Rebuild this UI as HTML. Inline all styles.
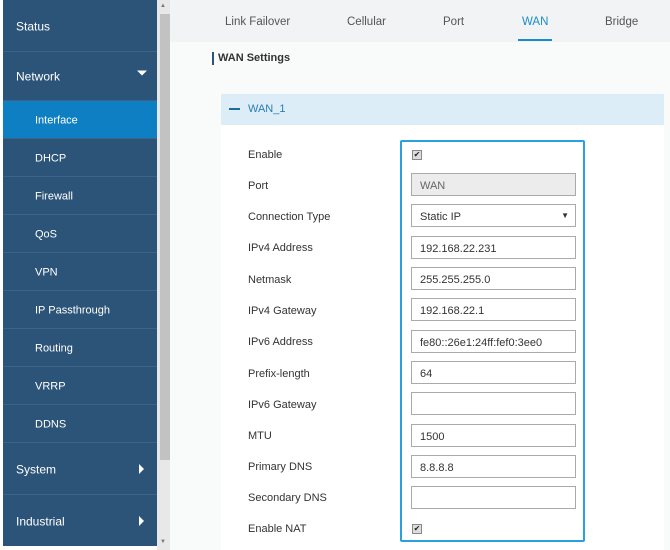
<!DOCTYPE html>
<html><head><style>
*{margin:0;padding:0;box-sizing:border-box}
body{width:670px;height:550px;background:#fff;font-family:"Liberation Sans",sans-serif;position:relative;overflow:hidden}
#sb{position:absolute;left:3px;top:0;width:154px;height:546px;background:#2c5478}
.it{position:absolute;left:0;width:154px;color:#fff;font-size:12px;border-bottom:1px solid #3d6488}
.it span{position:absolute;top:50%;transform:translateY(-45%)}
.top span{left:13px}
.sub span{left:32px;font-size:11px}
.act{background:#0e7fc3}
.tri{position:absolute;right:10px;top:50%;transform:translateY(-50%);width:0;height:0}
#scr{position:absolute;left:157px;top:0;width:13px;height:550px;background:#e8e8e8}
#thumb{position:absolute;left:160px;top:14px;width:10px;height:446px;background:#c2c2c2}
#tabs{position:absolute;left:170px;top:0;width:500px;height:42px;background:#f1f3f4}
.tab{position:absolute;top:16px;font-size:11.5px;color:#555}
#main{position:absolute;left:170px;top:42px;width:500px;height:508px;background:#f9fafa}
.lbl{position:absolute;left:248px;font-size:11px;color:#333}
.inp{position:absolute;left:411px;width:165px;height:23px;border:1px solid #aaa;background:#fff;font-size:11px;color:#333;padding:6px 0 0 8px}
.cb{position:absolute;left:412px;width:10px;height:10px;border:1px solid #888;background:#ddd;font-size:8px;line-height:8px;text-align:center;color:#222}
</style></head><body>
<div id="sb">
<div class="it top" style="top:0;height:52px"><span>Status</span></div>
<div class="it top" style="top:52px;height:49px"><span>Network</span><div class="tri" style="border-left:5px solid transparent;border-right:5px solid transparent;border-top:5px solid #fff;margin-top:-3px"></div></div>
<div class="it sub act" style="top:101px;height:38px"><span>Interface</span></div>
<div class="it sub" style="top:139px;height:38px"><span>DHCP</span></div>
<div class="it sub" style="top:177px;height:38px"><span>Firewall</span></div>
<div class="it sub" style="top:215px;height:38px"><span>QoS</span></div>
<div class="it sub" style="top:253px;height:38px"><span>VPN</span></div>
<div class="it sub" style="top:291px;height:38px"><span>IP Passthrough</span></div>
<div class="it sub" style="top:329px;height:38px"><span>Routing</span></div>
<div class="it sub" style="top:367px;height:38px"><span>VRRP</span></div>
<div class="it sub" style="top:405px;height:38px"><span>DDNS</span></div>
<div class="it top" style="top:443px;height:52px"><span>System</span><div class="tri" style="border-top:5px solid transparent;border-bottom:5px solid transparent;border-left:5px solid #fff;right:13px"></div></div>
<div class="it top" style="top:495px;height:51px;border:none"><span>Industrial</span><div class="tri" style="border-top:5px solid transparent;border-bottom:5px solid transparent;border-left:5px solid #fff;right:13px"></div></div>
</div>
<div id="scr"></div><div id="thumb"></div>
<div id="tabs">
<div class="tab" style="left:55px">Link Failover</div>
<div class="tab" style="left:177px">Cellular</div>
<div class="tab" style="left:273px">Port</div>
<div class="tab" style="left:352px;color:#1a8ccc">WAN</div>
<div style="position:absolute;left:348px;top:39px;width:34px;height:2px;background:#1a8ccc"></div>
<div class="tab" style="left:435px">Bridge</div>
</div>
<div id="main"></div>
<div style="position:absolute;left:212px;top:52px;width:2px;height:13px;background:#2c5478"></div>
<div style="position:absolute;left:218px;top:52px;font-size:11px;font-weight:bold;color:#333">WAN Settings</div>
<div style="position:absolute;left:221px;top:94px;width:443px;height:31px;background:#dcedf7"></div>
<div style="position:absolute;left:229px;top:108px;width:11px;height:2px;background:#1a6e98"></div>
<div style="position:absolute;left:248px;top:103px;font-size:11px;color:#2a7db3">WAN_1</div>
<div style="position:absolute;left:221px;top:125px;width:443px;height:425px;background:#fff"></div>
<div style="position:absolute;left:400px;top:140px;width:185px;height:402px;border:2px solid #2ba0e0;border-radius:2px"></div>
<div class="lbl" style="top:149px">Enable</div><div class="cb" style="top:150px">✔</div>
<div class="lbl" style="top:180px">Port</div><div class="inp" style="top:173px;background:#ececec;color:#666">WAN</div>
<div class="lbl" style="top:211px">Connection Type</div><div class="inp" style="top:204px">Static IP<span style="position:absolute;right:6px;top:6px;font-size:8px">▼</span></div>
<div class="lbl" style="top:242px">IPv4 Address</div><div class="inp" style="top:236px">192.168.22.231</div>
<div class="lbl" style="top:274px">Netmask</div><div class="inp" style="top:267px">255.255.255.0</div>
<div class="lbl" style="top:305px">IPv4 Gateway</div><div class="inp" style="top:298px">192.168.22.1</div>
<div class="lbl" style="top:336px">IPv6 Address</div><div class="inp" style="top:330px">fe80::26e1:24ff:fef0:3ee0</div>
<div class="lbl" style="top:368px">Prefix-length</div><div class="inp" style="top:361px">64</div>
<div class="lbl" style="top:399px">IPv6 Gateway</div><div class="inp" style="top:392px"></div>
<div class="lbl" style="top:430px">MTU</div><div class="inp" style="top:424px">1500</div>
<div class="lbl" style="top:461px">Primary DNS</div><div class="inp" style="top:455px">8.8.8.8</div>
<div class="lbl" style="top:492px">Secondary DNS</div><div class="inp" style="top:486px"></div>
<div class="lbl" style="top:523px">Enable NAT</div><div class="cb" style="top:524px">✔</div>
<div style="position:absolute;left:160px;top:3px;font-size:6px;color:#777">▲</div>
<div style="position:absolute;left:160px;top:539px;font-size:6px;color:#777">▼</div>
</body></html>
